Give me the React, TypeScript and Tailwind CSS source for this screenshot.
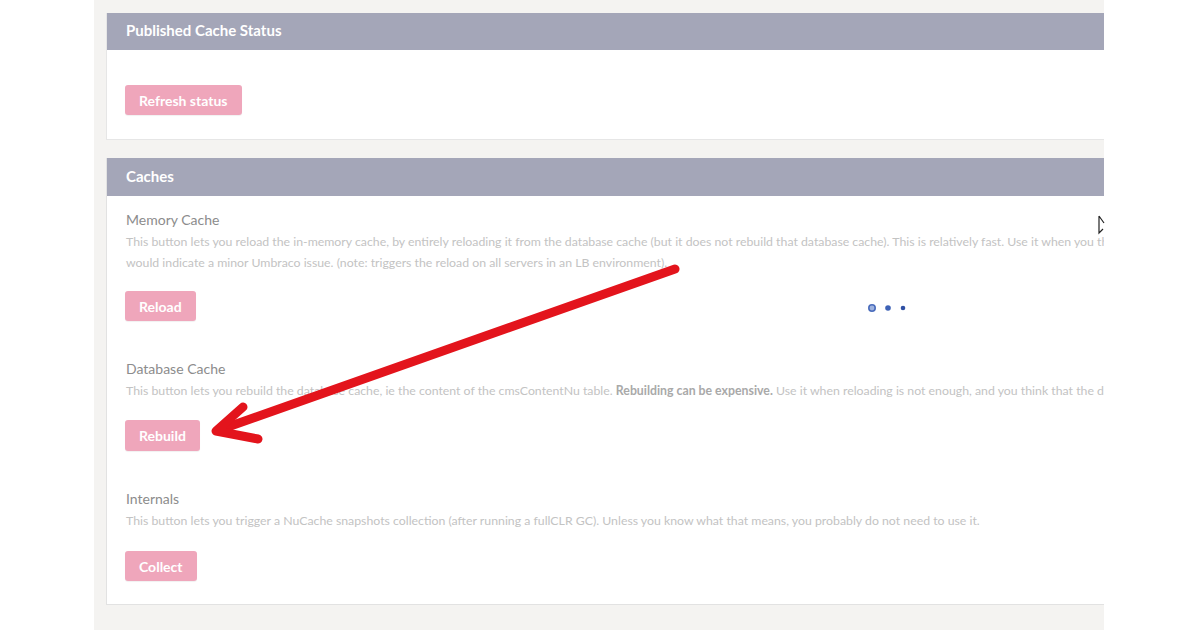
import React from 'react'

const Btn = ({ label, h = 'h-[30px]' }: { label: string, h?: string }) => (
    <button className={`${h} px-[14px] rounded-[3px] bg-[#efa6bb] text-white text-[14px] font-bold shadow-[0_1px_1px_rgba(0,0,0,0.06)]`}>
        {label}
    </button>
)

const Section = ({ title, children, label, top, gap, h }: { title: string, children: React.ReactNode, label: string, top: string, gap: string, h?: string }) => (
    <div className={top}>
        <h3 className="text-[14px] leading-[20px] text-[#8c8c8c]">{title}</h3>
        <div className="mt-[1px] text-[12.3px] leading-[21px] text-[#c3c3c3]">{children}</div>
        <div className={gap}>
            <Btn label={label} h={h} />
        </div>
    </div>
)

export default function App() {
    return (
        <div className="relative w-[1200px] h-[630px] bg-white flex overflow-hidden font-['Lato',sans-serif]">
            <div className="w-[94px] shrink-0" />
            <div className="w-[1010px] shrink-0 bg-[#f4f3f1] pl-3 pt-[13px] overflow-hidden">
                <div className="w-[1300px] bg-white border border-[#e6e6e6] border-t-0">
                    <div className="h-[37px] bg-[#a4a6b8] pl-[19px] pb-[3px] flex items-center text-white text-[15px] font-bold">
                        Published Cache Status
                    </div>
                    <div className="h-[89px] pl-[18px] pt-[35px]">
                        <Btn label="Refresh status" />
                    </div>
                </div>

                <div className="w-[1300px] mt-[18px] bg-white border border-[#e2e2e2] border-t-0 pb-[23px]">
                    <div className="h-[38px] bg-[#a4a6b8] pl-[19px] pb-[2px] flex items-center text-white text-[15px] font-bold">
                        Caches
                    </div>
                    <div className="pl-[19px]">
                        <Section title="Memory Cache" label="Reload" top="pt-[14px]" gap="mt-[18px] -ml-px">
                            <p className="whitespace-nowrap">This button lets you reload the in-memory cache, by entirely reloading it from the database cache (but it does not rebuild that database cache). This is relatively fast. Use it when you think that the memory cache has not been properly refreshed, following some events that</p>
                            <p className="whitespace-nowrap">would indicate a minor Umbraco issue. (note: triggers the reload on all servers in an LB environment).</p>
                        </Section>
                        <Section title="Database Cache" label="Rebuild" top="pt-[38px]" gap="mt-[19px] -ml-px" h="h-[31px]">
                            <p className="whitespace-nowrap">This button lets you rebuild the database cache, ie the content of the cmsContentNu table. <b className="text-[#a9a9a9]">Rebuilding can be expensive.</b> Use it when reloading is not enough, and you think that the database cache has not been properly generated.</p>
                        </Section>
                        <Section title="Internals" label="Collect" top="pt-[38px]" gap="mt-[20px] -ml-px">
                            <p className="whitespace-nowrap">This button lets you trigger a NuCache snapshots collection (after running a fullCLR GC). Unless you know what that means, you probably do not need to use it.</p>
                        </Section>
                    </div>
                </div>
            </div>

            {/* loading dots */}
            <svg className="absolute left-[866px] top-[302px]" width="44" height="12" viewBox="0 0 44 12">
                <circle cx="6" cy="6" r="3.2" fill="#9fb3de" stroke="#4a6cbc" strokeWidth="1.6" />
                <circle cx="22" cy="6" r="2.8" fill="#3e62b6" />
                <circle cx="37" cy="6" r="2.3" fill="#2f50a4" />
            </svg>

            {/* mouse cursor */}
            <svg className="absolute left-[1098px] top-[215px]" width="8" height="20" viewBox="0 0 8 20">
                <path d="M1 1 L1 18 L5 14 M1 1 L6 8" fill="none" stroke="#222" strokeWidth="1.2" />
            </svg>

            {/* red arrow */}
            <svg className="absolute left-0 top-0 pointer-events-none" width="1200" height="630" viewBox="0 0 1200 630">
                <g stroke="#e3141c" strokeWidth="9" strokeLinecap="round" strokeLinejoin="round" fill="none">
                    <path d="M675 269 L222 429" />
                    <path d="M243 407 L216 431 L258 439" />
                </g>
            </svg>
        </div>
    )
}
